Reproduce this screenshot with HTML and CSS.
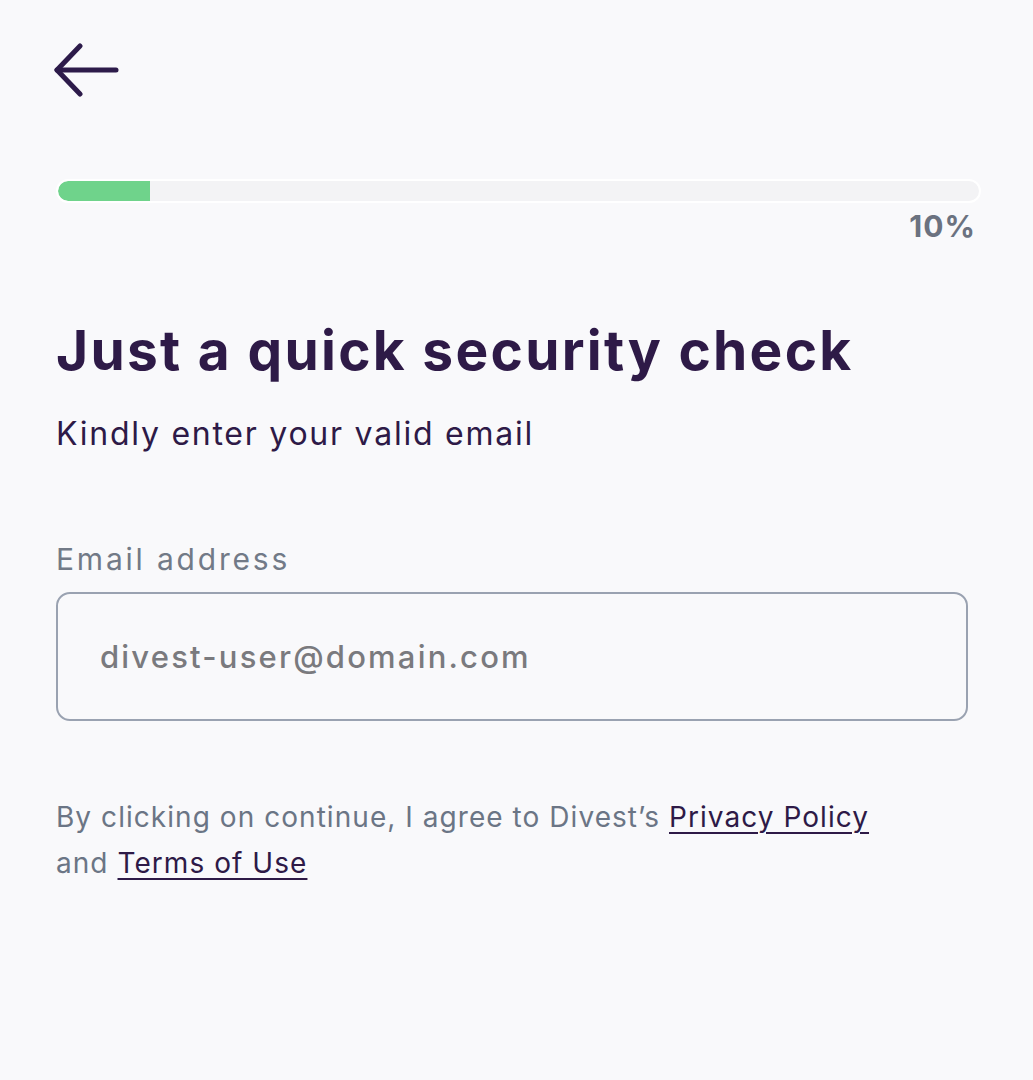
FILE: index.html
```html
<!DOCTYPE html>
<html lang="en">
<head>
<meta charset="utf-8">
<title>Security check</title>
<link rel="stylesheet" href="styles.css">
</head>
<body>
<main class="page">
  <button class="back" aria-label="Back">
    <svg width="66" height="56" viewBox="0 0 66 56" fill="none" stroke="#2d1b4a" stroke-width="5" stroke-linecap="round" stroke-linejoin="round">
      <path d="M3 28 H62"/>
      <path d="M26 4 L3 28 L26 52"/>
    </svg>
  </button>

  <div class="progress">
    <div class="track"><div class="fill" style="width:10%"></div></div>
    <div class="pct">10%</div>
  </div>

  <h1 class="title">Just a quick security check</h1>
  <p class="subtitle">Kindly enter your valid email</p>

  <label class="label" for="email">Email address</label>
  <div class="field">
    <input id="email" class="input" type="email" placeholder="divest-user@domain.com">
  </div>

  <p class="terms">By clicking on continue, I agree to Divest’s <a href="#">Privacy Policy</a><br>and <a href="#">Terms of Use</a></p>
</main>
</body>
</html>
```
FILE: styles.css
```css
html, body {
  margin: 0;
  background: #f9f9fb;
}
body {
  font-family: "Inter", "Open Sans", sans-serif;
  color: #2e1a47;
}
.page {
  padding: 42px 52px 0 56px;
  display: flex;
  flex-direction: column;
  align-items: flex-start;
}
.back {
  background: none;
  border: 0;
  padding: 0;
  margin: 0 0 0 -2px;
  height: 56px;
  cursor: pointer;
  display: block;
}
.progress {
  margin-top: 81px;
  width: 925px;
  display: flex;
  flex-direction: column;
  align-items: flex-end;
}
.track {
  width: 100%;
  height: 24px;
  box-sizing: border-box;
  background: #f3f3f5;
  border: 2px solid #ffffff;
  border-radius: 12px;
  overflow: hidden;
}
.fill {
  height: 100%;
  background: #6fd38b;
  border-radius: 10px 0 0 10px;
}
.pct {
  margin-top: 5px;
  margin-right: 5px;
  font-size: 30px;
  font-weight: 700;
  letter-spacing: 1px;
  color: #6b7280;
  line-height: 36px;
}
.title {
  margin: 72px 0 0;
  font-size: 55px;
  font-weight: 700;
  letter-spacing: 2.3px;
  line-height: 68px;
  color: #2e1a47;
}
.subtitle {
  margin: 30px 0 0;
  font-size: 32px;
  font-weight: 400;
  letter-spacing: 1.75px;
  line-height: 40px;
  color: #2e1a47;
}
.label {
  margin-top: 86px;
  font-size: 30px;
  letter-spacing: 2.8px;
  line-height: 38px;
  color: #727a87;
}
.field {
  margin-top: 14px;
  width: 912px;
}
.input {
  width: 100%;
  box-sizing: border-box;
  height: 129px;
  border: 2px solid #9aa2b1;
  border-radius: 14px;
  background: #f9f9fb;
  padding: 0 0 0 42px;
  font-family: "Inter", "Open Sans", sans-serif;
  font-size: 31px;
  font-weight: 500;
  letter-spacing: 2.2px;
  color: #2e1a47;
  outline: none;
}
.input::placeholder {
  color: #7a7a7e;
}
.terms {
  margin: 73px 0 0;
  font-size: 28px;
  letter-spacing: 1.05px;
  line-height: 46px;
  color: #6b7585;
}
.terms a {
  color: #2e1a47;
  text-decoration: underline;
  text-underline-offset: 5px;
  text-decoration-thickness: 2px;
}
```
